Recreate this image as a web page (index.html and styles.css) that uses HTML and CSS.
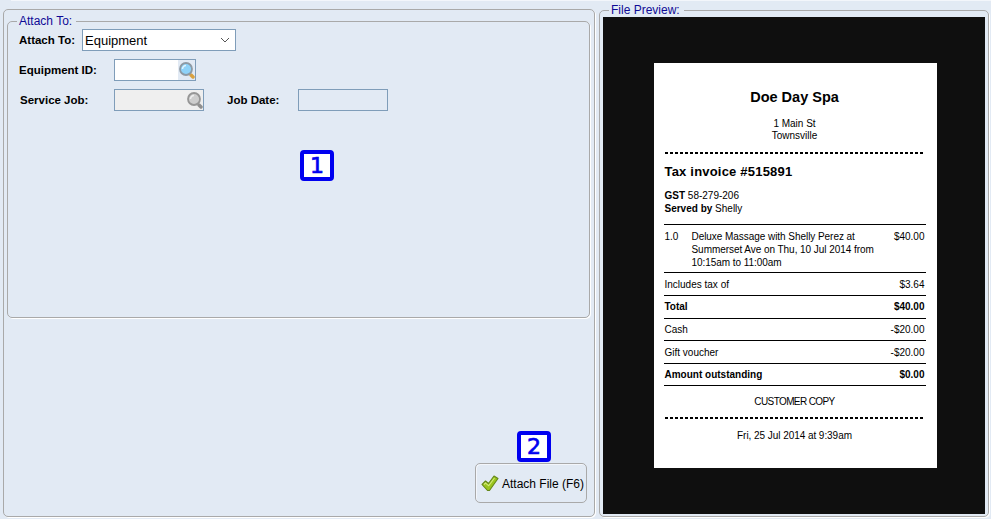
FILE: index.html
```html
<!DOCTYPE html>
<html lang="en">
<head>
  <meta charset="UTF-8">
  <title>Attach File</title>
  <link rel="stylesheet" href="styles.css">
</head>
<body>
  <div class="strip"></div>
  <div class="main">
    <div class="panel left">
      <fieldset class="group">
        <legend>Attach To:</legend>
        <div class="row first">
          <label class="lbl lbl-attach">Attach To:</label>
          <div class="field select">
            <span>Equipment</span>
            <svg width="10" height="6" viewBox="0 0 10 6"><path d="M1 1l4 4 4-4" fill="none" stroke="#555" stroke-width="1"/></svg>
          </div>
        </div>
        <div class="row">
          <label class="lbl lbl-id">Equipment ID:</label>
          <div class="field search">
            <input type="text" class="txt">
            <span class="search-btn">
              <svg width="16" height="17" viewBox="0 0 16 17">
                <path d="M12 13l2 2" stroke="#d9a13f" stroke-width="3.500" stroke-linecap="round"/>
                <circle cx="7" cy="7" r="6" fill="#8ed2f8" stroke="#8d99a3" stroke-width="1.800"/>
                <path d="M3.500 7a3.500 3.500 0 0 1 3.500-3.500" fill="none" stroke="#dff3fe" stroke-width="1.500"/>
              </svg>
            </span>
          </div>
        </div>
        <div class="row">
          <label class="lbl lbl-id lbl-job">Service Job:</label>
          <div class="field search disabled">
            <input type="text" class="txt" disabled>
            <span class="search-btn">
              <svg width="16" height="17" viewBox="0 0 16 17">
                <path d="M12 13l2 2" stroke="#8f8f8f" stroke-width="3.500" stroke-linecap="round"/>
                <circle cx="7" cy="7" r="6" fill="#cdcdcd" stroke="#969696" stroke-width="1.800"/>
                <path d="M3.500 7a3.500 3.500 0 0 1 3.500-3.500" fill="none" stroke="#eeeeee" stroke-width="1.500"/>
              </svg>
            </span>
          </div>
          <label class="lbl lbl-date">Job Date:</label>
          <div class="field date"></div>
        </div>
        <div class="badge badge-one">1</div>
      </fieldset>
      <div class="actions">
        <div class="badge badge-two">2</div>
        <button type="button" class="btn">
          <svg width="18" height="17" viewBox="0 0 18 17">
            <path d="M1 9.500L4.500 6l3 2.500L13 1l4 2.500-8.500 12h-2z" fill="#9ac51e" stroke="#64871a" stroke-width="1.100" stroke-linejoin="round"/>
            <path d="M3 9.500l1.500-1.500 3.200 2.800L13.500 3" fill="none" stroke="#d3e97a" stroke-width="1.100"/>
          </svg>
          <span>Attach File (F6)</span>
        </button>
      </div>
    </div>

    <fieldset class="panel preview">
      <legend>File Preview:</legend>
      <div class="stage">
        <div class="receipt">
          <h1>Doe Day Spa</h1>
          <p class="addr">1 Main St<br>Townsville</p>
          <div class="dash"></div>
          <h2>Tax invoice #515891</h2>
          <p class="meta"><b>GST</b> 58-279-206<br><b>Served by</b> Shelly</p>
          <div class="item">
            <span class="qty">1.0</span>
            <span class="desc">Deluxe Massage with Shelly Perez at Summerset Ave on Thu, 10 Jul 2014 from 10:15am to 11:00am</span>
            <span>$40.00</span>
          </div>
          <div class="line"><span>Includes tax of</span><span>$3.64</span></div>
          <div class="line strong"><span>Total</span><span>$40.00</span></div>
          <div class="line short"><span>Cash</span><span>-$20.00</span></div>
          <div class="line"><span>Gift voucher</span><span>-$20.00</span></div>
          <div class="line strong short"><span>Amount outstanding</span><span>$0.00</span></div>
          <p class="copy">CUSTOMER COPY</p>
          <div class="dash"></div>
          <p class="stamp">Fri, 25 Jul 2014 at 9:39am</p>
        </div>
      </div>
    </fieldset>
  </div>
</body>
</html>
```

FILE: styles.css
```css
* {
  box-sizing: border-box;
}

html, body {
  margin: 0;
  height: 100%;
  overflow: hidden;
}

body {
  font-family: "Liberation Sans", Arial, sans-serif;
  font-size: 12px;
  background: #e2eaf4;
  color: #000;
}

.strip {
  height: 1px;
  margin-left: 11px;
  background: #f3f6fb;
}

.main {
  display: flex;
  gap: 4px;
  height: 518px;
  padding: 8px 1px 2px 3px;
}

.panel {
  border: 1px solid #a9a9a9;
  border-radius: 5px;
  margin: 0;
  box-shadow: 1px 1px 0 #fff;
}

.left {
  width: 592px;
  display: flex;
  flex-direction: column;
}

.group {
  position: relative;
  height: 303px;
  margin: 5px 4px 0 3px;
  padding: 0 0 0 11px;
  border: 1px solid #a9a9a9;
  border-radius: 5px;
  box-shadow: 1px 1px 0 #fff;
}

legend {
  padding: 0 4px 0 2px;
  margin-left: -2px;
  line-height: 12px;
  color: #0f0a96;
}

.row {
  display: flex;
  align-items: center;
  height: 22px;
  margin-top: 8px;
}

.row.first {
  margin-top: 2px;
}

.lbl {
  font-size: 11.5px;
  font-weight: bold;
  white-space: nowrap;
}

.lbl-attach {
  width: 63px;
}

.lbl-id {
  width: 95px;
}

.lbl-job {
  padding-left: 1px;
}

.lbl-date {
  margin-left: 23px;
  width: 71px;
}

.field {
  display: flex;
  align-items: center;
  height: 22px;
  border: 1px solid #7f9db9;
  background: #fff;
}

.select {
  width: 154px;
  justify-content: space-between;
  padding: 0 5px 0 2px;
  font-size: 13px;
}

.search {
  width: 82px;
}

.search.disabled {
  width: 90px;
}

.search.disabled,
.search.disabled .txt {
  background: #efefef;
}

.txt {
  flex: 1;
  min-width: 0;
  height: 100%;
  border: 0;
  padding: 0 2px;
  outline: none;
  background: #fff;
}

.search-btn {
  display: flex;
  align-items: center;
  justify-content: center;
  width: 17px;
  height: 100%;
  background: #e2eaf4;
}

.disabled .search-btn {
  background: #efefef;
}

.date {
  width: 90px;
  background: #e2eaf4;
}

.badge {
  position: absolute;
  width: 34px;
  height: 31px;
  border: 4px solid #0000f0;
  border-radius: 4px;
  background: #fff;
  color: #0000f0;
  font-family: "DejaVu Sans", sans-serif;
  font-size: 22px;
  line-height: 23px;
  text-align: center;
  -webkit-text-stroke: 0.7px #0000f0;
}

.badge-one {
  left: 292px;
  top: 123px;
}

.actions {
  position: relative;
  display: flex;
  justify-content: flex-end;
  margin-top: 145px;
  padding-right: 7px;
}

.badge-two {
  right: 43px;
  top: -32px;
}

.btn {
  display: flex;
  align-items: center;
  gap: 3px;
  width: 112px;
  height: 40px;
  padding: 1px 0 0 5px;
  border: 1px solid #a9a9a9;
  border-radius: 5px;
  background: #e2eaf4;
  box-shadow: inset 1px 1px 0 #f3f6fb;
  font-family: "Liberation Sans", Arial, sans-serif;
  font-size: 12px;
  white-space: nowrap;
  color: #000;
}

.preview {
  width: 390px;
  margin-top: -5px;
  padding: 1px 3px 2px;
}

.preview legend {
  margin-left: 6px;
}

.stage {
  display: flex;
  align-items: flex-start;
  justify-content: center;
  height: 497px;
  padding: 46px 0 0 2px;
  background: #0f0f0f;
}

.receipt {
  width: 283px;
  height: 405px;
  padding: 0 11px 0 10px;
  background: #fff;
  font-size: 10px;
  line-height: 13px;
}

.receipt h1 {
  margin: 26px 0 0;
  font-size: 14.5px;
  line-height: 17px;
  text-align: center;
}

.addr {
  margin: 12px 0 0;
  line-height: 12px;
  text-align: center;
}

.dash {
  height: 2px;
  margin: 10px 1px 0;
  background: repeating-linear-gradient(90deg, #000 0 3px, #fff 3px 5px);
}

.receipt h2 {
  margin: 10px 0 0;
  padding-left: 1px;
  font-size: 13px;
  line-height: 15px;
  letter-spacing: 0.2px;
}

.meta {
  margin: 10px 0 0;
  padding-left: 1px;
}

.item {
  display: flex;
  justify-content: space-between;
  margin-top: 9px;
  padding: 5px 1px 3px 1px;
  border-top: 1px solid #000;
}

.qty {
  width: 27px;
  flex: none;
}

.desc {
  width: 185px;
  flex: none;
  margin-right: auto;
  letter-spacing: -0.05px;
}

.line {
  display: flex;
  justify-content: space-between;
  height: 23px;
  padding: 5px 1px 0;
  border-top: 1px solid #000;
}

.strong {
  padding-top: 4px;
  font-weight: bold;
}

.short {
  height: 22px;
  padding-top: 4px;
}

.copy {
  margin: 0;
  padding-top: 9px;
  border-top: 1px solid #000;
  text-align: center;
  letter-spacing: -0.6px;
}

.copy + .dash {
  margin-top: 9px;
}

.stamp {
  margin: 10px 0 0;
  text-align: center;
  letter-spacing: -0.05px;
}
```
